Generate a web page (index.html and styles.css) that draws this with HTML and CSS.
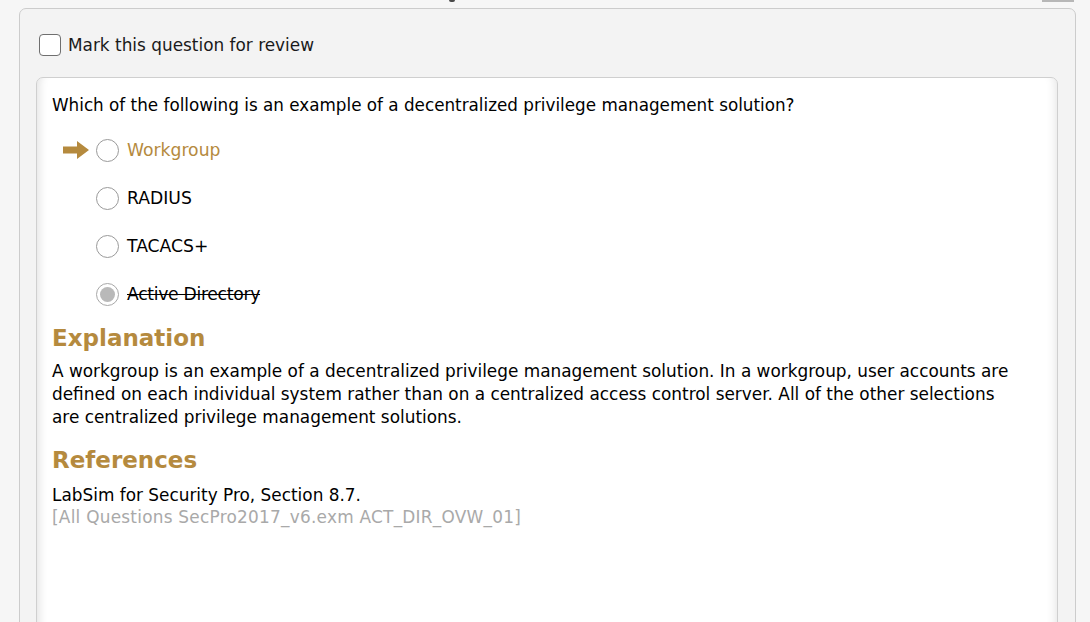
FILE: index.html
```html
<!DOCTYPE html>
<html>
<head>
<meta charset="utf-8">
<link rel="stylesheet" href="styles.css">
</head>
<body>
<div class="topbits"><span class="frag"></span><span class="tab"></span></div>
<div class="outer">
  <label class="mark"><span class="box"></span><span>Mark this question for review</span></label>
  <div class="inner">
    <p class="question">Which of the following is an example of a decentralized privilege management solution?</p>
    <div class="options">
      <div class="opt correct">
        <span class="arrow"><svg width="26" height="18" viewBox="0 0 26 18"><path d="M0 5.5 H14 V0 L26 9 L14 18 V12.5 H0 Z" fill="#b58a3e"/></svg></span>
        <span class="radio"></span><span class="label">Workgroup</span>
      </div>
      <div class="opt">
        <span class="arrow"></span>
        <span class="radio"></span><span class="label">RADIUS</span>
      </div>
      <div class="opt">
        <span class="arrow"></span>
        <span class="radio"></span><span class="label">TACACS+</span>
      </div>
      <div class="opt chosen">
        <span class="arrow"></span>
        <span class="radio"></span><span class="label">Active Directory</span>
      </div>
    </div>
    <h2>Explanation</h2>
    <p class="para">A workgroup is an example of a decentralized privilege management solution. In a workgroup, user accounts are defined on each individual system rather than on a centralized access control server. All of the other selections are centralized privilege management solutions.</p>
    <h2 class="refs">References</h2>
    <p class="ref">LabSim for Security Pro, Section 8.7.</p>
    <p class="ref grey">[All Questions SecPro2017_v6.exm ACT_DIR_OVW_01]</p>
  </div>
</div>
</body>
</html>
```
FILE: styles.css
```css
html, body { margin: 0; padding: 0; }
body {
  background: #f6f6f6;
  font-family: "DejaVu Sans", Verdana, sans-serif;
  color: #000;
  width: 1090px;
  height: 622px;
  overflow: hidden;
  position: relative;
}
.topbits { position: absolute; top: 0; left: 0; width: 1090px; height: 3px; }
.frag { position: absolute; left: 449px; top: 0; width: 6px; height: 2px; background: #4a4a4a; border-radius: 0 0 3px 3px; }
.tab { position: absolute; left: 1042px; top: 0; width: 32px; height: 2px; background: #b7b7b7; }
.outer {
  margin: 8px 14px 0 19px;
  background: #f3f3f3;
  border: 1px solid #cccccc;
  border-radius: 7px;
  padding: 24px 17px 0 19px;
  height: 700px;
  box-sizing: border-box;
}
.outer > .inner { margin-left: -3px; }
.mark { display: flex; align-items: center; gap: 7px; font-size: 16.9px; color: #1a1a1a; height: 22px; padding-top: 1px; }
.box {
  width: 20px; height: 20px;
  border: 1px solid #6f6f6f;
  border-radius: 4px;
  background: #fff;
  margin-top: -1px;
}
.inner {
  margin-top: 21px;
  background: #fff;
  border: 1px solid #cfcfcf;
  border-radius: 7px;
  padding: 16px 15px 0 15px;
  height: 700px;
  box-shadow: inset 12px 0 10px -10px rgba(0,0,0,0.12), inset -12px 0 10px -10px rgba(0,0,0,0.10);
}
.question { margin: 0; font-size: 16.8px; line-height: 22px; }
.options { margin-top: 10px; }
.opt { display: flex; align-items: center; height: 48px; font-size: 17.2px; }
.arrow { width: 44px; display: flex; align-items: center; padding-left: 11px; box-sizing: border-box; }
.radio {
  width: 21px; height: 21px;
  border: 1px solid #9a9a9a;
  border-radius: 50%;
  background: #fff;
  box-sizing: content-box;
  display: flex; align-items: center; justify-content: center;
}
.label { margin-left: 8px; }
.correct .label { color: #b58a3e; }
.chosen .label { text-decoration: line-through; letter-spacing: -0.3px; }
.chosen .radio { border-color: #a8a8a8; }
.chosen .radio::after {
  content: ""; width: 15px; height: 15px; border-radius: 50%; background: #b9b9b9;
}
h2 {
  margin: 5px 0 0 0;
  font-size: 23px;
  line-height: 30px;
  font-weight: bold;
  color: #b58a3e;
}
.para { margin: 7px 0 0 0; font-size: 16.9px; line-height: 23px; max-width: 965px; }
h2.refs { margin-top: 16px; }
.ref { margin: 0; font-size: 16.9px; line-height: 22px; }
h2.refs + .ref { margin-top: 9px; }
.grey { color: #a9a9a9; letter-spacing: 0.25px; }
```
